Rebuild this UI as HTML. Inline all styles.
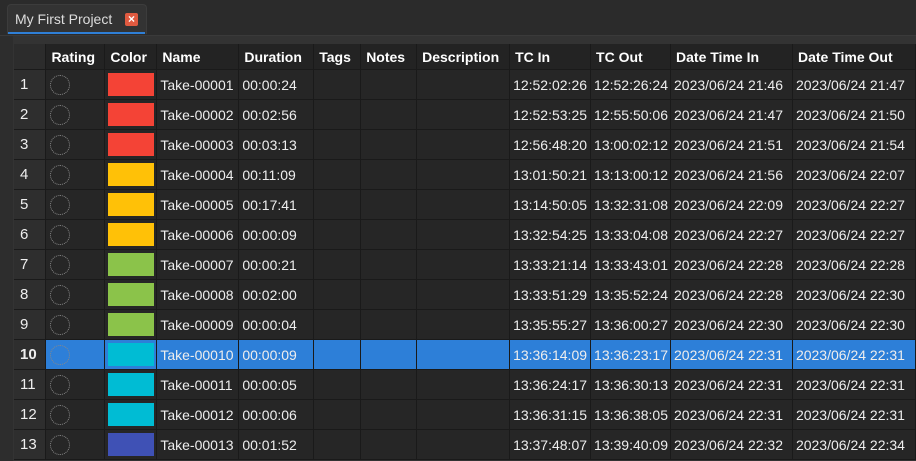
<!DOCTYPE html>
<html><head><style>
body{margin:0;width:916px;height:461px;background:#2b2b2b;overflow:hidden;font-family:"Liberation Sans",sans-serif;color:#eee;position:relative}
.tabbar{position:absolute;left:0;top:0;width:916px;height:35px;background:#2b2b2b;border-bottom:1px solid #3a3a3a}
.tab{position:absolute;left:7px;top:4px;width:138px;height:29px;background:#333;border:1px solid #3c3c3c;border-bottom:none;border-radius:4px 4px 0 0}
.tab span{position:absolute;left:7px;top:6px;font-size:14px;color:#ddd}
.x{position:absolute;left:117px;top:8px;width:13px;height:13px;background:#e05a40;border-radius:2px;color:#fff;font-size:12px;line-height:13px;text-align:center;font-weight:bold}
.ul{position:absolute;left:8px;top:32px;width:137px;height:2px;background:#2f7fd6}
.panel{position:absolute;left:0;top:36px;width:916px;height:425px;background:#333}
.lstrip{position:absolute;left:0;top:36px;width:13px;height:425px;background:#2d2d2d}
table{position:absolute;left:14px;top:44px;border-collapse:collapse;table-layout:fixed;font-size:14px;background:#262626}
td,th{height:29px;padding:0 0 0 3px;border-right:1px solid #1a1a1a;border-bottom:1px solid #1a1a1a;white-space:nowrap;overflow:hidden;text-align:left;vertical-align:middle;line-height:16px;box-sizing:content-box}
th{height:25px;background:#232323;font-weight:bold;color:#fff;padding-left:5px}
td.n{background:#2e2e2e;padding-left:6px;font-size:15px}
tr.sel td{background:#2d7fd8}
tr.sel td.n{background:#2e2e2e;font-weight:bold}
.c{display:block;width:46px;height:23px}
.r{display:block;width:20px;height:20px;border:1px dotted #888;border-radius:50%;margin-left:1px;box-sizing:border-box}
</style></head><body>
<div class="tabbar"><div class="tab"><span>My First Project</span><div class="x">×</div></div><div class="ul"></div></div>
<div class="panel"></div><div class="lstrip"></div>
<table>
<colgroup><col style="width:32px"><col style="width:59px"><col style="width:52px"><col style="width:82px"><col style="width:75px"><col style="width:47px"><col style="width:56px"><col style="width:93px"><col style="width:81px"><col style="width:80px"><col style="width:122px"><col style="width:123px"></colgroup>
<tr><th style="background:#2c2c2c"></th><th>Rating</th><th>Color</th><th>Name</th><th>Duration</th><th>Tags</th><th>Notes</th><th>Description</th><th>TC In</th><th>TC Out</th><th>Date Time In</th><th>Date Time Out</th></tr>
<tr><td class="n">1</td><td><i class="r"></i></td><td><i class="c" style="background:#f44336"></i></td><td>Take-00001</td><td>00:00:24</td><td></td><td></td><td></td><td>12:52:02:26</td><td>12:52:26:24</td><td>2023/06/24 21:46</td><td>2023/06/24 21:47</td></tr>
<tr><td class="n">2</td><td><i class="r"></i></td><td><i class="c" style="background:#f44336"></i></td><td>Take-00002</td><td>00:02:56</td><td></td><td></td><td></td><td>12:52:53:25</td><td>12:55:50:06</td><td>2023/06/24 21:47</td><td>2023/06/24 21:50</td></tr>
<tr><td class="n">3</td><td><i class="r"></i></td><td><i class="c" style="background:#f44336"></i></td><td>Take-00003</td><td>00:03:13</td><td></td><td></td><td></td><td>12:56:48:20</td><td>13:00:02:12</td><td>2023/06/24 21:51</td><td>2023/06/24 21:54</td></tr>
<tr><td class="n">4</td><td><i class="r"></i></td><td><i class="c" style="background:#ffc107"></i></td><td>Take-00004</td><td>00:11:09</td><td></td><td></td><td></td><td>13:01:50:21</td><td>13:13:00:12</td><td>2023/06/24 21:56</td><td>2023/06/24 22:07</td></tr>
<tr><td class="n">5</td><td><i class="r"></i></td><td><i class="c" style="background:#ffc107"></i></td><td>Take-00005</td><td>00:17:41</td><td></td><td></td><td></td><td>13:14:50:05</td><td>13:32:31:08</td><td>2023/06/24 22:09</td><td>2023/06/24 22:27</td></tr>
<tr><td class="n">6</td><td><i class="r"></i></td><td><i class="c" style="background:#ffc107"></i></td><td>Take-00006</td><td>00:00:09</td><td></td><td></td><td></td><td>13:32:54:25</td><td>13:33:04:08</td><td>2023/06/24 22:27</td><td>2023/06/24 22:27</td></tr>
<tr><td class="n">7</td><td><i class="r"></i></td><td><i class="c" style="background:#8bc34a"></i></td><td>Take-00007</td><td>00:00:21</td><td></td><td></td><td></td><td>13:33:21:14</td><td>13:33:43:01</td><td>2023/06/24 22:28</td><td>2023/06/24 22:28</td></tr>
<tr><td class="n">8</td><td><i class="r"></i></td><td><i class="c" style="background:#8bc34a"></i></td><td>Take-00008</td><td>00:02:00</td><td></td><td></td><td></td><td>13:33:51:29</td><td>13:35:52:24</td><td>2023/06/24 22:28</td><td>2023/06/24 22:30</td></tr>
<tr><td class="n">9</td><td><i class="r"></i></td><td><i class="c" style="background:#8bc34a"></i></td><td>Take-00009</td><td>00:00:04</td><td></td><td></td><td></td><td>13:35:55:27</td><td>13:36:00:27</td><td>2023/06/24 22:30</td><td>2023/06/24 22:30</td></tr>
<tr class="sel"><td class="n">10</td><td><i class="r"></i></td><td><i class="c" style="background:#00bcd4"></i></td><td>Take-00010</td><td>00:00:09</td><td></td><td></td><td></td><td>13:36:14:09</td><td>13:36:23:17</td><td>2023/06/24 22:31</td><td>2023/06/24 22:31</td></tr>
<tr><td class="n">11</td><td><i class="r"></i></td><td><i class="c" style="background:#00bcd4"></i></td><td>Take-00011</td><td>00:00:05</td><td></td><td></td><td></td><td>13:36:24:17</td><td>13:36:30:13</td><td>2023/06/24 22:31</td><td>2023/06/24 22:31</td></tr>
<tr><td class="n">12</td><td><i class="r"></i></td><td><i class="c" style="background:#00bcd4"></i></td><td>Take-00012</td><td>00:00:06</td><td></td><td></td><td></td><td>13:36:31:15</td><td>13:36:38:05</td><td>2023/06/24 22:31</td><td>2023/06/24 22:31</td></tr>
<tr><td class="n">13</td><td><i class="r"></i></td><td><i class="c" style="background:#3f51b5"></i></td><td>Take-00013</td><td>00:01:52</td><td></td><td></td><td></td><td>13:37:48:07</td><td>13:39:40:09</td><td>2023/06/24 22:32</td><td>2023/06/24 22:34</td></tr>
</table>
</body></html>
